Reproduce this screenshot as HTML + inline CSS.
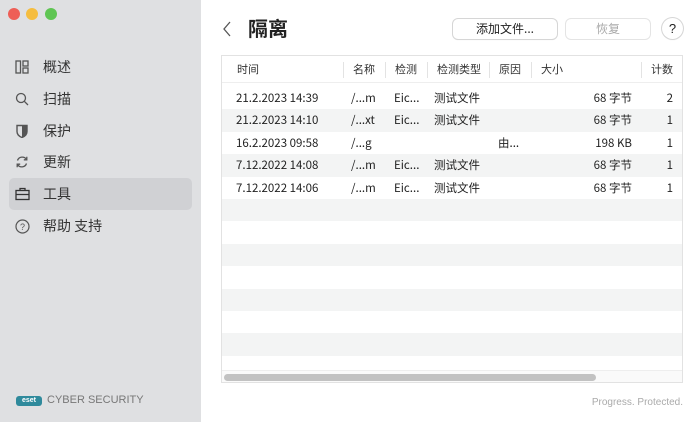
<!DOCTYPE html>
<html><head><meta charset="utf-8"><style>
*{margin:0;padding:0;box-sizing:border-box}
body{width:700px;height:422px;overflow:hidden;background:#fff;font-family:"Liberation Sans","Noto Sans CJK SC",sans-serif;color:#222;position:relative}
.c{font-family:"Noto Sans CJK SC",sans-serif}
.side{position:absolute;left:0;top:0;width:201px;height:422px;background:#dfe0e2}
.dot{position:absolute;top:8px;width:12px;height:12px;border-radius:50%}
.item{position:absolute;left:9px;width:183px;height:32px;border-radius:5px;font-size:14px;color:#333;font-family:"Noto Sans CJK SC",sans-serif}
.item.sel{background:#d0d1d4}
.item span{position:absolute;left:34px;top:0;line-height:32px}
.item svg{position:absolute;left:6px;top:9px}
.main{position:absolute;left:201px;top:0;width:499px;height:422px;background:#fff}
.abs{position:absolute}
.tbl{position:absolute;left:221px;top:55px;width:462px;height:328px;border:1px solid #e2e2e2;background:#fff;overflow:hidden;font-family:"Noto Sans CJK SC",sans-serif}
.hd{position:absolute;left:0;top:0;width:100%;height:27px;font-size:11px;color:#333;border-bottom:1px solid #eee}
.hd div{position:absolute;top:0;line-height:27px}
.hd .sep{position:absolute;top:6px;width:1px;height:16px;background:#e3e3e3}
.row{position:absolute;left:0;width:100%;height:22.4px;font-size:11.5px;color:#222}
.row.g{background:#f3f4f4}
.row div{position:absolute;top:0;line-height:22px;white-space:nowrap}
.btn{position:absolute;top:19px;height:20px;border-radius:5px;font-size:12px;text-align:center;line-height:20px;background:#fff;box-shadow:0 0 0 1px #d6d6d6,0 1px 1px rgba(0,0,0,.1);font-family:"Noto Sans CJK SC",sans-serif}
</style></head><body>
<div class="side">
<div class="dot" style="left:8px;background:#ee5f57"></div>
<div class="dot" style="left:26px;background:#f5bd3f"></div>
<div class="dot" style="left:45px;background:#5fc553"></div>
<div class="item" style="top:51px"><svg width="14" height="14" viewBox="0 0 14 14" fill="none" stroke="#555" stroke-width="1.3"><rect x="1" y="1" width="4.5" height="12"/><rect x="8" y="1" width="5" height="5"/><rect x="8" y="8" width="5" height="5"/></svg><span>概述</span></div>
<div class="item" style="top:83px"><svg width="14" height="14" viewBox="0 0 14 14" fill="none" stroke="#555" stroke-width="1.3"><circle cx="6" cy="6" r="4.5"/><path d="M9.3 9.3L13 13"/></svg><span>扫描</span></div>
<div class="item" style="top:115px"><svg width="14" height="14" viewBox="0 0 14 14"><path d="M2 1.5h10v6c0 3-2.5 5-5 6-2.5-1-5-3-5-6z" fill="none" stroke="#555" stroke-width="1.4"/><path d="M7 1.5h5v6c0 3-2.5 5-5 6z" fill="#555"/></svg><span>保护</span></div>
<div class="item" style="top:146px"><svg width="14" height="14" viewBox="0 0 14 14" fill="none" stroke="#555" stroke-width="1.3"><path d="M11.5 4.5A5 5 0 0 0 2.5 5.5M2.5 9.5a5 5 0 0 0 9-1"/><path d="M11.8 1.8v3h-3M2.2 12.2v-3h3"/></svg><span>更新</span></div>
<div class="item sel" style="top:178px"><svg width="15" height="14" viewBox="0 0 15 14" fill="none" stroke="#333" stroke-width="1.3"><rect x="1" y="3.5" width="13" height="9"/><path d="M5 3.5V1.5h5v2M1 7.5h13"/></svg><span>工具</span></div>
<div class="item" style="top:210px"><svg width="15" height="15" viewBox="0 0 15 15" fill="none" stroke="#555" stroke-width="1.2"><circle cx="7.5" cy="7.5" r="6.5"/><text x="7.5" y="11" font-size="9" text-anchor="middle" fill="#555" stroke="none" font-family="Liberation Sans">?</text></svg><span>帮助 支持</span></div>
<div class="abs" style="left:16px;top:396px;width:26px;height:10px;border-radius:3px;background:#2f8a9c;color:#fff;font-size:7px;font-weight:bold;line-height:10px;text-align:center">eset</div>
<div class="abs" style="left:47px;top:394px;font-size:11px;color:#777">CYBER SECURITY</div>
</div>
<div class="main"></div>
<svg class="abs" style="left:222px;top:21px" width="10" height="16" viewBox="0 0 10 16"><path d="M8 1L2 8l6 7" fill="none" stroke="#555" stroke-width="1.3"/></svg>
<div class="abs c" style="left:248px;top:13px;font-size:20px;font-weight:bold;color:#222;line-height:30px">隔离</div>
<div class="btn" style="left:453px;width:104px">添加文件...</div>
<div class="btn" style="left:566px;width:84px;color:#aaa;box-shadow:0 0 0 1px #e4e4e4">恢复</div>
<div class="abs" style="left:662px;top:18px;width:21px;height:21px;border-radius:50%;box-shadow:0 0 0 1px #d6d6d6,0 1px 1px rgba(0,0,0,.1);text-align:center;line-height:21px;font-size:13px">?</div>
<div class="tbl">
<div class="hd">
<div style="left:15px">时间</div><div class="sep" style="left:121px"></div>
<div style="left:131px">名称</div><div class="sep" style="left:163px"></div>
<div style="left:173px">检测</div><div class="sep" style="left:205px"></div>
<div style="left:215px">检测类型</div><div class="sep" style="left:267px"></div>
<div style="left:277px">原因</div><div class="sep" style="left:309px"></div>
<div style="left:319px">大小</div><div class="sep" style="left:419px"></div>
<div style="left:429px">计数</div>
</div>
<div class="row" style="top:31px"><div style="left:14px">21.2.2023 14:39</div><div style="left:129px">/...m</div><div style="left:172px">Eic...</div><div style="left:212px">测试文件</div><div style="right:50px">68 字节</div><div style="right:9px">2</div></div>
<div class="row g" style="top:53.4px"><div style="left:14px">21.2.2023 14:10</div><div style="left:129px">/...xt</div><div style="left:172px">Eic...</div><div style="left:212px">测试文件</div><div style="right:50px">68 字节</div><div style="right:9px">1</div></div>
<div class="row" style="top:75.8px"><div style="left:14px">16.2.2023 09:58</div><div style="left:129px">/...g</div><div style="left:276px">由...</div><div style="right:50px">198 KB</div><div style="right:9px">1</div></div>
<div class="row g" style="top:98.2px"><div style="left:14px">7.12.2022 14:08</div><div style="left:129px">/...m</div><div style="left:172px">Eic...</div><div style="left:212px">测试文件</div><div style="right:50px">68 字节</div><div style="right:9px">1</div></div>
<div class="row" style="top:120.6px"><div style="left:14px">7.12.2022 14:06</div><div style="left:129px">/...m</div><div style="left:172px">Eic...</div><div style="left:212px">测试文件</div><div style="right:50px">68 字节</div><div style="right:9px">1</div></div>
<div class="row g" style="top:143px"></div>
<div class="row g" style="top:187.8px"></div>
<div class="row g" style="top:232.6px"></div>
<div class="row g" style="top:277.4px"></div>
<div class="abs" style="left:0;top:314px;width:100%;height:14px;background:#fafafa;border-top:1px solid #eee"></div>
<div class="abs" style="left:2px;top:318px;width:372px;height:7px;border-radius:4px;background:#c2c2c2"></div>
</div>
<div class="abs" style="right:17px;top:397px;font-size:10px;color:#aaa">Progress. Protected.</div>
</body></html>
